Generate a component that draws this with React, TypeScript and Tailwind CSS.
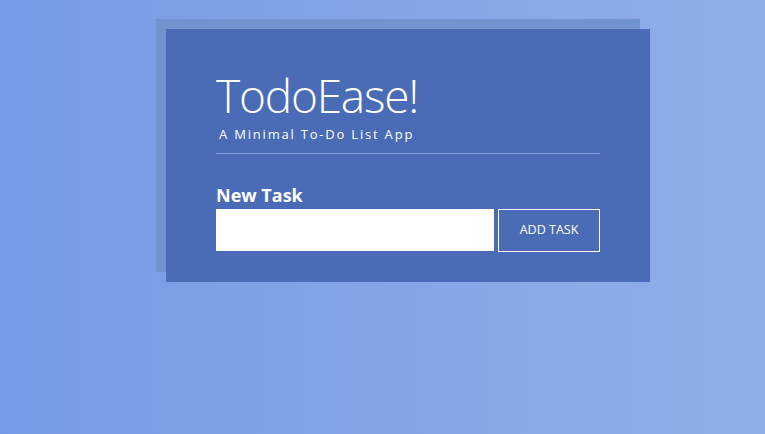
export default function App() {
  return (
    <div className="min-h-[434px] w-full bg-gradient-to-r from-[#769be6] to-[#90aee8] pt-[29px] pl-[166px] font-['Open_Sans',sans-serif]">
      <div className="w-[484px] bg-[#4a6bb5] px-[50px] pt-[38px] pb-[30px] text-white shadow-[-10px_-10px_0_#7194d0]">
        <h1 className="text-[46px] font-light leading-[56px] tracking-[-1.2px]">TodoEase!</h1>
        <p className="mt-[2px] pl-[3px] text-[13px] leading-[18px] tracking-[1.8px]">A Minimal To-Do List App</p>
        <div className="mt-[10px] h-px bg-[#7e98d6]" />
        <div className="mt-[30px] text-[18px] font-bold leading-[22px]">New Task</div>
        <div className="mt-[3px] flex gap-[4px]">
          <input className="h-[42px] w-[278px] bg-white px-2 text-black outline-none" />
          <button className="h-[43px] flex-1 border border-white text-[12.5px] uppercase">Add Task</button>
        </div>
      </div>
    </div>
  )
}
